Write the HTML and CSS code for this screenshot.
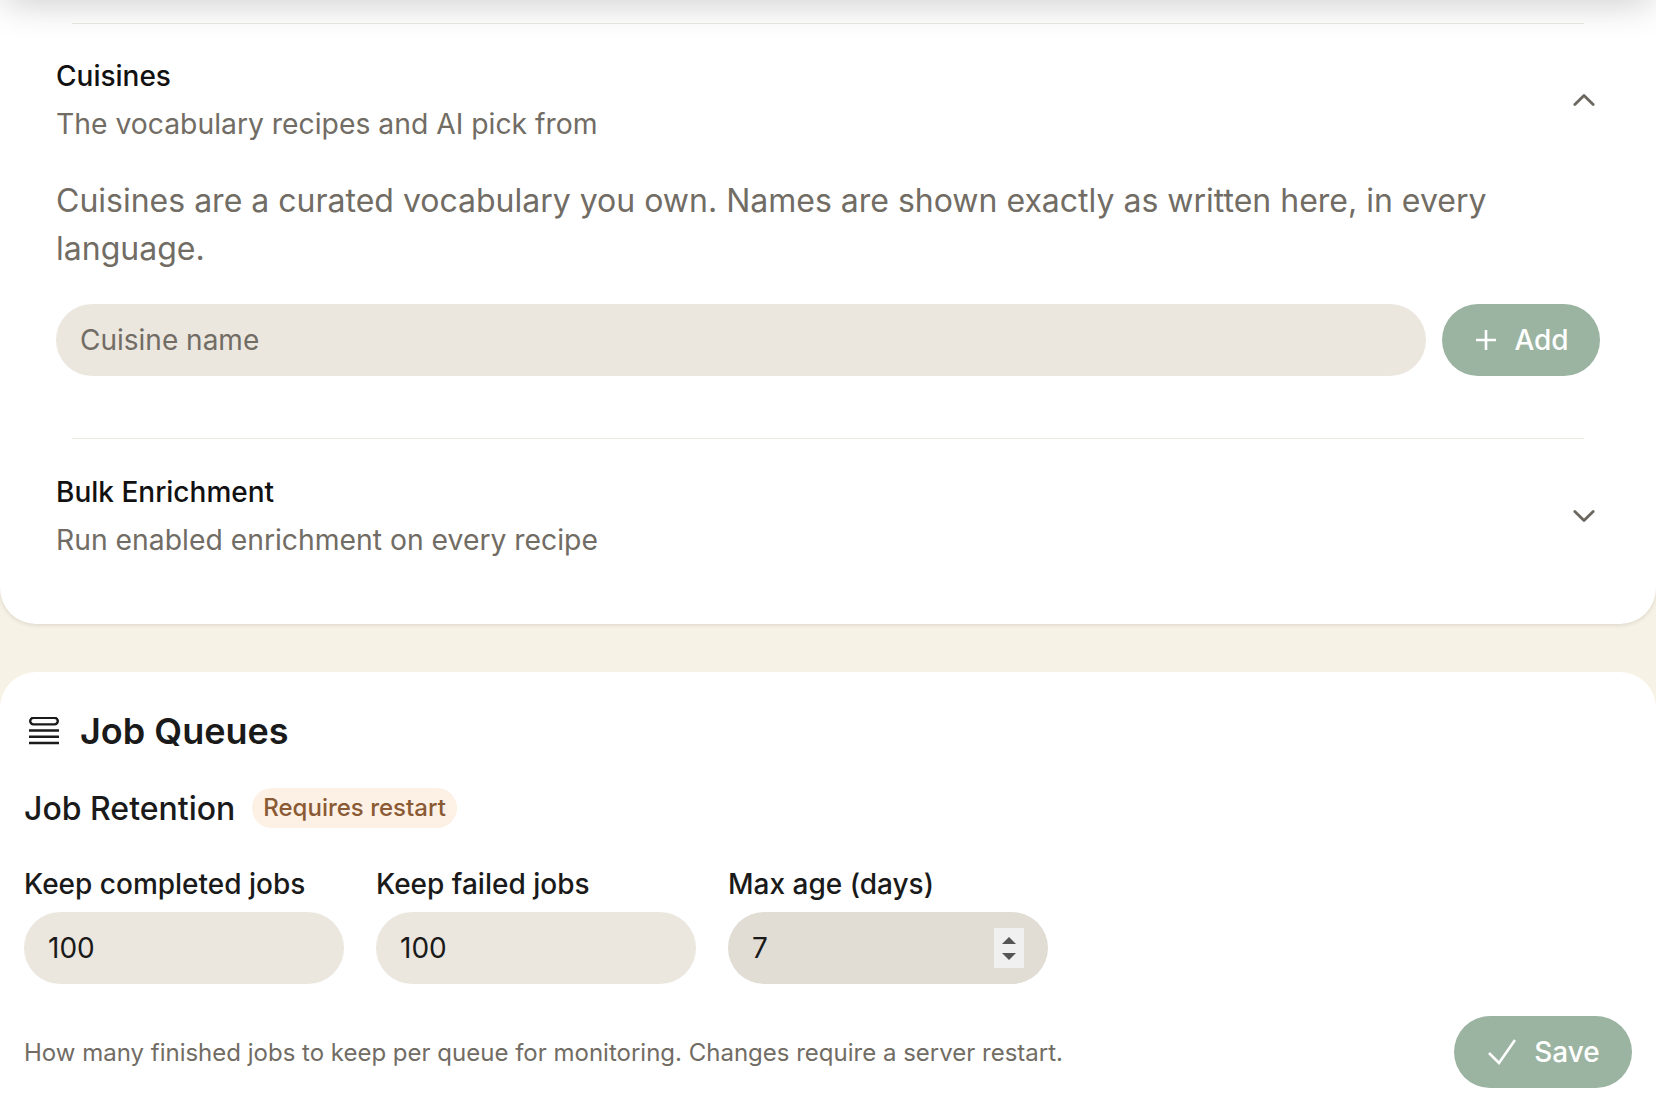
FILE: index.html
```html
<!DOCTYPE html>
<html lang="en">
<head>
  <meta charset="UTF-8"/>
  <title>Settings</title>
  <link rel="stylesheet" href="styles.css">
</head>
<body>
  <div class="top-shade"></div>

  <section class="card card-admin">
    <div class="divider first"></div>
    <div class="row-head">
      <div>
        <div class="row-title">Cuisines</div>
        <div class="row-sub">The vocabulary recipes and AI pick from</div>
      </div>
      <svg class="chevron" viewBox="0 0 24 14"><path d="M2 12 L12 2 L22 12"/></svg>
    </div>
    <p class="desc">Cuisines are a curated vocabulary you own. Names are shown exactly as written here, in every language.</p>
    <form class="add-row">
      <input class="pill-input grow" type="text" placeholder="Cuisine name">
      <button class="btn add-btn" type="button">
        <svg class="plus" viewBox="0 0 22 22"><path d="M11 1 V21 M1 11 H21"/></svg>
        Add
      </button>
    </form>
    <div class="divider second"></div>
    <div class="row-head">
      <div>
        <div class="row-title">Bulk Enrichment</div>
        <div class="row-sub">Run enabled enrichment on every recipe</div>
      </div>
      <svg class="chevron" viewBox="0 0 24 14"><path d="M2 2 L12 12 L22 2"/></svg>
    </div>
  </section>

  <section class="card card-jobs">
    <h2 class="card-title">
      <svg class="queue-icon" viewBox="0 0 30 28">
        <rect x="1.2" y="0.8" width="27.6" height="6.6" rx="3.3"/>
        <path d="M0.5 13.5 H29.5 M0.5 19.8 H29.5 M0.5 26 H29.5"/>
      </svg>
      Job Queues
    </h2>
    <div class="retention-head">
      <h3>Job Retention</h3>
      <span class="badge">Requires restart</span>
    </div>
    <div class="fields">
      <label class="field">
        <span>Keep completed jobs</span>
        <input class="pill-input" type="text" value="100">
      </label>
      <label class="field">
        <span>Keep failed jobs</span>
        <input class="pill-input" type="text" value="100">
      </label>
      <label class="field">
        <span>Max age (days)</span>
        <input class="pill-input hovered" type="text" value="7">
        <i class="spinner"><b class="up"></b><b class="down"></b></i>
      </label>
    </div>
    <div class="save-row">
      <p class="hint">How many finished jobs to keep per queue for monitoring. Changes require a server restart.</p>
      <button class="btn save-btn" type="button">
        <svg class="check" viewBox="0 0 28 26"><path d="M1 14 L11 24 L27 1"/></svg>
        Save
      </button>
    </div>
  </section>
</body>
</html>
```

FILE: styles.css
```css
* {
  box-sizing: border-box;
}
html, body {
  height: 100%;
}
body {
  margin: 0;
  font-family: Inter, "Noto Sans", sans-serif;
  background: #f7f2e6;
  color: #1a1a1a;
  overflow: hidden;
  position: relative;
}
.top-shade {
  position: absolute;
  top: -40px;
  left: 0;
  right: 0;
  height: 40px;
  border-radius: 36px;
  box-shadow: 0 4px 36px rgba(0,0,0,0.2);
  z-index: 2;
}
.card {
  background: #fff;
}
.card-admin {
  height: 624px;
  padding: 23px 56px 0;
  border-radius: 0 0 36px 36px;
  box-shadow: 0 1px 4px rgba(90,80,60,0.18);
}
.divider {
  height: 1px;
  background: #ece9e4;
  margin: 0 16px 32px;
}
.divider.second {
  margin-top: 62px;
  margin-bottom: 33px;
}
.row-head {
  display: flex;
  justify-content: space-between;
  align-items: center;
}
.row-title {
  font-size: 28px;
  line-height: 40px;
  font-weight: 450;
  color: #111;
}
.row-sub {
  font-size: 28.3px;
  line-height: 40px;
  margin-top: 8px;
  color: #716c64;
}
.chevron {
  width: 22px;
  height: 14px;
  margin-right: 5px;
  fill: none;
  stroke: #6b665e;
  stroke-width: 3;
  stroke-linecap: round;
  stroke-linejoin: round;
}
.desc {
  margin: 33px 0 31px;
  font-size: 32px;
  line-height: 48px;
  color: #716c64;
}
.add-row {
  display: flex;
  gap: 16px;
}
.grow {
  flex: 1;
}
.pill-input {
  height: 72px;
  width: 320px;
  padding: 0 24px;
  border: none;
  outline: none;
  border-radius: 36px;
  background: #ebe6de;
  font-family: inherit;
  font-size: 28px;
  color: #1a1a1a;
}
.pill-input.grow {
  width: auto;
}
.pill-input.hovered {
  background: #e1ddd5;
}
.pill-input::placeholder {
  color: #716c64;
  opacity: 1;
}
.btn {
  height: 72px;
  display: flex;
  align-items: center;
  justify-content: center;
  border: none;
  border-radius: 36px;
  background: #9bb3a1;
  color: #fff;
  font-family: inherit;
  font-size: 28px;
  font-weight: 500;
}
.add-btn {
  width: 158px;
  gap: 17px;
  padding-left: 8px;
}
.plus {
  width: 22px;
  height: 22px;
  fill: none;
  stroke: #fff;
  stroke-width: 2.6;
}
.save-btn {
  width: 178px;
  gap: 18px;
  padding-left: 8px;
}
.check {
  width: 28px;
  height: 26px;
  fill: none;
  stroke: #fff;
  stroke-width: 2.6;
}
.card-jobs {
  margin-top: 48px;
  height: 448px;
  padding: 35px 24px 0;
  border-radius: 36px 36px 0 0;
}
.card-title {
  display: flex;
  align-items: center;
  gap: 21px;
  margin: 0 0 31px;
  padding-left: 5px;
  height: 48px;
  font-size: 36px;
  font-weight: 600;
}
.queue-icon {
  width: 30px;
  height: 28px;
  fill: none;
  stroke: #1a1a1a;
  stroke-width: 2.4;
  stroke-linecap: round;
}
.retention-head {
  display: flex;
  align-items: center;
  gap: 17px;
  height: 44px;
  margin-bottom: 36px;
}
.retention-head h3 {
  margin: 0;
  font-size: 32px;
  font-weight: 450;
}
.badge {
  height: 40px;
  line-height: 40px;
  padding: 0 11px;
  border-radius: 20px;
  background: #fdf0e4;
  color: #8a5a34;
  font-size: 24px;
  font-weight: 450;
}
.fields {
  display: flex;
  gap: 32px;
}
.field {
  position: relative;
  display: flex;
  flex-direction: column;
  gap: 10px;
  font-size: 28px;
  line-height: 36px;
  font-weight: 450;
}
.spinner {
  position: absolute;
  right: 24px;
  bottom: 16px;
  width: 30px;
  height: 40px;
  background: #f0f0f0;
  display: flex;
  flex-direction: column;
  align-items: center;
  justify-content: center;
  gap: 9px;
}
.spinner b {
  width: 0;
  height: 0;
  border-left: 7.5px solid transparent;
  border-right: 7.5px solid transparent;
}
.spinner .up {
  border-bottom: 7px solid #555;
}
.spinner .down {
  border-top: 7px solid #555;
}
.save-row {
  display: flex;
  justify-content: space-between;
  align-items: center;
  margin-top: 32px;
}
.hint {
  margin: 0;
  font-size: 24px;
  color: #716c64;
}
```
